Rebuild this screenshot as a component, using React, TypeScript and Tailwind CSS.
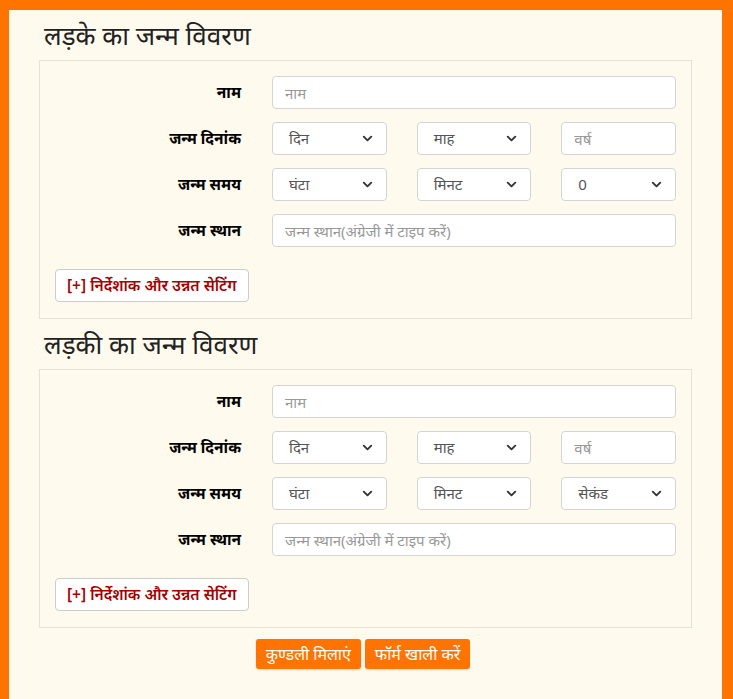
import { ChevronDown } from "lucide-react";

const font = "font-['Noto_Sans','Noto_Sans_Devanagari','Lohit_Devanagari',sans-serif]";

function Select({ label }: { label: string }) {
  return (
    <div className="flex h-[33px] min-w-0 items-center justify-between rounded-[4px] border border-[#d4d4d4] bg-white pl-[16px] pr-[11px] text-[15px] text-[#555]">
      <span>{label}</span>
      <ChevronDown size={15} strokeWidth={3} className="text-[#333]" aria-hidden="true" />
    </div>
  );
}

function TextBox({ placeholder, wide = false }: { placeholder: string; wide?: boolean }) {
  return (
    <input
      className={`${wide ? "col-span-3" : ""} h-[33px] w-full min-w-0 rounded-[4px] border border-[#d4d4d4] bg-white px-[12px] text-[15px] text-[#555] outline-none placeholder:text-[#999]`}
      placeholder={placeholder}
    />
  );
}

function Row({ label, children }: { label: string; children: React.ReactNode }) {
  return (
    <div className="flex items-center">
      <label className="w-[201px] shrink-0 text-right text-[15.5px] font-bold text-black">{label}</label>
      <div className="ml-[31px] grid min-w-0 flex-1 grid-cols-3 gap-x-[30px]">{children}</div>
    </div>
  );
}

function BirthBox({ title, seconds }: { title: string; seconds: string }) {
  return (
    <>
      <h2 className="flex h-[50px] items-center pl-[35px] text-[26px] text-[#222]">{title}</h2>
      <div className="mx-[30px] border border-[#e6e1d6] pb-[16px] pt-[15px]">
        <div className="flex flex-col gap-[13px] pr-[15px]">
          <Row label="नाम">
            <TextBox placeholder="नाम" wide />
          </Row>
          <Row label="जन्म दिनांक">
            <Select label="दिन" />
            <Select label="माह" />
            <TextBox placeholder="वर्ष" />
          </Row>
          <Row label="जन्म समय">
            <Select label="घंटा" />
            <Select label="मिनट" />
            <Select label={seconds} />
          </Row>
          <Row label="जन्म स्थान">
            <TextBox placeholder="जन्म स्थान(अंग्रेजी में टाइप करें)" wide />
          </Row>
        </div>
        <button
          type="button"
          className="ml-[15px] mt-[22px] h-[33px] rounded-[4px] border border-[#ccc] bg-white px-[11px] text-[15.5px] font-semibold text-[#a30000]"
        >
          [+] निर्देशांक और उन्नत सेटिंग
        </button>
      </div>
    </>
  );
}

export default function App() {
  return (
    <div className={`min-h-[699px] bg-[#ff7300] pl-[9px] pr-[11px] pt-[10px] ${font}`}>
      <div className="min-h-[689px] bg-[#fffaee]">
        <BirthBox title="लड़के का जन्म विवरण" seconds="0" />
        <BirthBox title="लड़की का जन्म विवरण" seconds="सेकंड" />
        <div className="mt-[11px] flex justify-center gap-[4px] pr-[5px]">
          <button type="button" className="h-[30px] rounded-[3px] bg-[#ff7300] px-[10px] text-[16px] text-white shadow-sm">
            कुण्डली मिलाएं
          </button>
          <button type="button" className="h-[30px] rounded-[3px] bg-[#ff7300] px-[10px] text-[16px] text-white shadow-sm">
            फॉर्म खाली करें
          </button>
        </div>
      </div>
    </div>
  );
}
